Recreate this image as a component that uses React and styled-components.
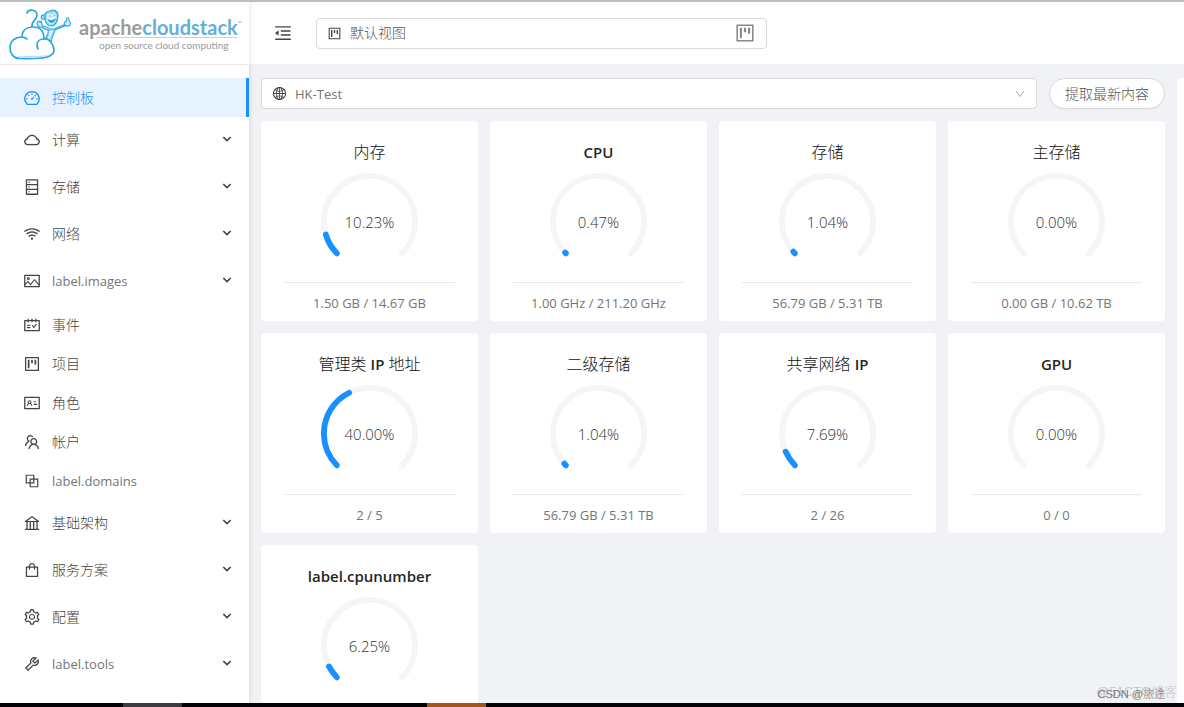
import React from "react";
import styled, { createGlobalStyle, css } from "styled-components";
import {
  AiOutlineBank,
  AiOutlineBlock,
  AiOutlineCloud,
  AiOutlineDashboard,
  AiOutlineDatabase,
  AiOutlineDown,
  AiOutlineGlobal,
  AiOutlineIdcard,
  AiOutlineMenuFold,
  AiOutlinePicture,
  AiOutlineProject,
  AiOutlineSchedule,
  AiOutlineSetting,
  AiOutlineShopping,
  AiOutlineTeam,
  AiOutlineTool,
  AiOutlineWifi,
} from "react-icons/ai";

const GlobalStyle = createGlobalStyle`
  *, *::before, *::after {
    box-sizing: border-box;
  }

  body {
    margin: 0;
    color: #555;
    background: #f0f2f5;
    font-family: "Open Sans", "Noto Sans CJK SC", sans-serif;
    font-size: 14px;
    font-weight: 300;
    line-height: 22px;
  }

  button, select {
    font: inherit;
    color: inherit;
  }
`;

const latinText = css`
  color: #757575;
  font-size: 13px;
  font-weight: 400;
`;

const Page = styled.div`
  display: flex;
  flex-direction: column;
  height: 100vh;
  border-top: 2px solid #bdbdbd;
`;

const Layout = styled.div`
  display: flex;
  flex: 1;
  min-height: 0;
  overflow: hidden;
`;

const Sidebar = styled.aside`
  z-index: 1;
  flex: none;
  width: 249px;
  background: #fff;
  box-shadow: 1px 0 4px rgba(0, 21, 41, 0.1);
`;

const LogoLink = styled.a`
  display: flex;
  align-items: center;
  gap: 7px;
  height: 63px;
  padding-left: 8px;
  border-bottom: 1px solid #e8e8e8;
  text-decoration: none;

  svg {
    flex: none;
  }
`;

const Wordmark = styled.span`
  display: flex;
  flex-direction: column;
  align-items: flex-end;
  padding-top: 2px;
  color: #9a9a9a;
  font-family: Lato, sans-serif;
`;

const WordmarkName = styled.span`
  font-size: 20px;
  font-weight: 700;
  line-height: 20px;
  white-space: nowrap;

  b {
    color: #63aedb;
    font-weight: 700;
  }

  sup {
    font-size: 5px;
    line-height: 0;
    vertical-align: 10px;
  }
`;

const WordmarkTagline = styled.span`
  margin-right: 5px;
  padding: 0 8px 0 2px;
  border-top: 1px solid #d0d0d0;
  font-size: 10px;
  font-weight: 400;
  line-height: 14px;
  white-space: nowrap;
`;

const Menu = styled.ul`
  margin: 13px 0 0;
  padding: 0;
  list-style: none;
`;

const MenuRow = styled.li`
  padding: ${({ $group }) => ($group ? "3px 0 5px" : "0")};
`;

const MenuLink = styled.a`
  display: flex;
  align-items: center;
  gap: 11px;
  height: 39px;
  padding: 0 17px 0 23px;
  color: #444;
  text-decoration: none;

  > svg:first-child {
    flex: none;
    font-size: 18px;
  }

  ${({ $active }) =>
    $active &&
    css`
      color: #1890ff;
      background: #e6f3ff;
      border-right: 3px solid #1890ff;
    `}
`;

const MenuText = styled.span`
  flex: 1;
  ${({ $latin }) => $latin && latinText}
`;

const Main = styled.main`
  display: flex;
  flex: 1;
  flex-direction: column;
  min-width: 0;
`;

const Header = styled.header`
  display: flex;
  flex: none;
  align-items: center;
  gap: 23px;
  height: 62px;
  padding: 0 24px;
  background: #fff;
  box-shadow: 0 1px 3px rgba(0, 21, 41, 0.12);
`;

const IconButton = styled.button`
  display: flex;
  padding: 0;
  border: 0;
  background: none;
  color: #444;
  font-size: 20px;
  cursor: pointer;
`;

const Field = styled.label`
  display: flex;
  flex: 1;
  align-items: center;
  gap: 8px;
  height: 31px;
  max-width: ${({ $maxWidth }) => $maxWidth || "none"};
  padding: 0 10px;
  border: 1px solid #d9d9d9;
  border-radius: 4px;
  background: #fff;

  svg {
    flex: none;
  }
`;

const FieldSelect = styled.select`
  flex: 1;
  min-width: 0;
  padding: 0;
  border: 0;
  outline: 0;
  appearance: none;
  background: none;
  ${({ $latin }) => $latin && latinText}
`;

const Content = styled.div`
  display: flex;
  flex: 1;
  gap: 12px;
  min-height: 0;
  padding: 14px 0 0 12px;
  background: #f0f2f5;
`;

const Dashboard = styled.section`
  display: flex;
  flex: 1;
  flex-direction: column;
  gap: 12px;
  min-width: 0;
`;

const Toolbar = styled.div`
  display: flex;
  gap: 12px;
`;

const FetchButton = styled.button`
  height: 31px;
  padding: 0 15px;
  border: 1px solid #d9d9d9;
  border-radius: 16px;
  background: #fff;
  box-shadow: 0 2px 0 rgba(0, 0, 0, 0.02);
  cursor: pointer;
`;

const CardGrid = styled.div`
  display: grid;
  grid-template-columns: repeat(4, 1fr);
  gap: 12px;
`;

const Card = styled.article`
  display: flex;
  flex-direction: column;
  align-items: center;
  height: 200px;
  padding: 19px 23px 0;
  border-radius: 4px;
  background: #fff;
`;

const CardTitle = styled.h2`
  margin: 0 0 9px;
  color: #111;
  font-size: 16px;
  font-weight: 300;
  line-height: 24px;
`;

const Latin = styled.span`
  color: #262626;
  font-size: 15px;
  font-weight: 600;
`;

const Gauge = styled.div`
  display: grid;
  place-items: center;

  > * {
    grid-area: 1 / 1;
  }
`;

const GaugeValue = styled.span`
  color: #333;
  font-size: 15px;
`;

const CardFooter = styled.p`
  align-self: stretch;
  margin: 12px 0 0;
  padding-top: 9px;
  border-top: 1px solid #e8e8e8;
  text-align: center;
  ${latinText}
`;

const EventsPanel = styled.aside`
  flex: none;
  width: 7px;
  border-radius: 4px 0 0 0;
  background: #fff;
`;

const Taskbar = styled.div`
  display: flex;
  flex: none;
  height: 4px;
  background: #050508;
`;

const TaskbarItem = styled.span`
  width: 59px;
  margin-left: ${({ $gap }) => $gap};
  background: ${({ $color }) => $color};
`;

const Watermark = styled.span`
  position: absolute;
  right: ${({ $right }) => $right};
  bottom: ${({ $bottom }) => $bottom};
  color: ${({ $color }) => $color};
  font-family: "Liberation Sans", "Noto Sans CJK SC", sans-serif;
  font-size: ${({ $size }) => $size};
  line-height: 16px;
`;

const CloudMonkey = () => (
  <svg width="64" height="54" viewBox="0 0 64 54" fill="none" stroke="#2aa7dc" strokeWidth="1.7" strokeLinecap="round" strokeLinejoin="round" aria-hidden="true">
    <path d="M19 7c1-4 10-4 10 2 0 6-6 5-5 12" />
    <path d="M40 23c1 5-1 8-4 11l7 4c0-6 3-9 4-14l10-4-.5-1.500L46 23z" fill="#9fd8f2" strokeWidth="1.1" />
    <path d="M41 25c1 4-1 7-3 10l3 1c0-5 3-7 4-12z" fill="#e4f5fc" stroke="none" />
    <path d="M42 24c-4 0-6-1-8-3-3 1-5-1-5-4l1-2 2 1 1-1 1 3 1 2 6 2" fill="#c4e6f6" strokeWidth="1.1" />
    <circle cx="35.500" cy="11" r="2.300" fill="#9fd8f2" strokeWidth="1.100" />
    <path d="M37 12c-1-4 1-7 5-7 4-2 8 0 8 5s-3 10-7 10-6-4-6-8z" fill="#9fd8f2" strokeWidth="1.2" />
    <path d="M39 10c1-3 3-3 5-1 1-2 4-2 4 0 1 4-1 9-5 9-3-1-5-4-4-8z" fill="#e4f5fc" stroke="none" />
    <path d="M39.500 13c3 2 6 1 8.500-1-1 6-7 7-8.500 1z" fill="#2aa7dc" stroke="none" />
    <path d="M41 10.500l1-1 1 1M45.500 10l1-1 1 1" strokeWidth=".8" />
    <path d="M58 20c-3-2-2-5 0-4l1-4c2-1 2 1 2 3 2 1 2 4 0 5-1 0-2 0-3-.5z" fill="#d9f0fa" strokeWidth="1.100" />
    <path d="M12 52.500C5 52.500 2 47 2 42c0-7 5-11 12-11 0-7 5-10 11-10 7 0 11 4 11 12 4-1 7 2 9 7 2 5 1 9-6 11-7 2-17 1.500-27 1.500z" fill="#fff" />
    <path d="M3.500 44c2 6 8 7 14 6 8-1 16 1 24-2-4 4-10 3-15 3-8 0-19 3-23-7z" fill="#b8e1f4" stroke="none" />
    <path d="M14 31c3 0 4 1 5 2M36 33c-5 0-7 3-7 6 0 2 1 3 1 4" />
  </svg>
);

const Chevron = () => (
  <svg width="10" height="14" viewBox="0 0 10 14" fill="none" stroke="#444" strokeWidth="1.7" aria-hidden="true">
    <path d="M1.300 4 5 7.500 8.700 4" />
  </svg>
);

// Arc length of the ring in viewBox units, 75 of which stay open at the bottom
const RING_LENGTH = 2 * Math.PI * 47;
const RING_GAP = 75;
const RING_PATH = "M50 50m0 47a47 47 0 1 1 0-94a47 47 0 1 1 0 94";

const GaugeRing = ({ percent }) => {
  const full = RING_LENGTH - RING_GAP;
  return (
    <svg width="97" height="97" viewBox="0 0 100 100" fill="none" strokeWidth="6" strokeLinecap="round" aria-hidden="true">
      <path d={RING_PATH} stroke="#f5f5f5" strokeDasharray={`${full} ${RING_LENGTH}`} strokeDashoffset={-RING_GAP / 2} />
      {percent > 0 && (
        <path
          d={RING_PATH}
          stroke="#1890ff"
          strokeDasharray={`${(full * percent) / 100} ${RING_LENGTH}`}
          strokeDashoffset={-RING_GAP / 2}
        />
      )}
    </svg>
  );
};

const menuItems = [
  { text: "控制板", icon: AiOutlineDashboard, active: true },
  { text: "计算", icon: AiOutlineCloud, group: true },
  { text: "存储", icon: AiOutlineDatabase, group: true },
  { text: "网络", icon: AiOutlineWifi, group: true },
  { text: "label.images", icon: AiOutlinePicture, group: true, latin: true },
  { text: "事件", icon: AiOutlineSchedule },
  { text: "项目", icon: AiOutlineProject },
  { text: "角色", icon: AiOutlineIdcard },
  { text: "帐户", icon: AiOutlineTeam },
  { text: "label.domains", icon: AiOutlineBlock, latin: true },
  { text: "基础架构", icon: AiOutlineBank, group: true },
  { text: "服务方案", icon: AiOutlineShopping, group: true },
  { text: "配置", icon: AiOutlineSetting, group: true },
  { text: "label.tools", icon: AiOutlineTool, group: true, latin: true },
];

const cards = [
  { id: "memory", title: "内存", percent: 10.23, usage: "1.50 GB / 14.67 GB" },
  { id: "cpu", title: <Latin>CPU</Latin>, percent: 0.47, usage: "1.00 GHz / 211.20 GHz" },
  { id: "storage", title: "存储", percent: 1.04, usage: "56.79 GB / 5.31 TB" },
  { id: "primary", title: "主存储", percent: 0, usage: "0.00 GB / 10.62 TB" },
  { id: "management-ip", title: <>管理类 <Latin>IP</Latin> 地址</>, percent: 40, usage: "2 / 5" },
  { id: "secondary", title: "二级存储", percent: 1.04, usage: "56.79 GB / 5.31 TB" },
  { id: "shared-ip", title: <>共享网络 <Latin>IP</Latin></>, percent: 7.69, usage: "2 / 26" },
  { id: "gpu", title: <Latin>GPU</Latin>, percent: 0, usage: "0 / 0" },
  { id: "cpunumber", title: <Latin>label.cpunumber</Latin>, percent: 6.25, usage: "" },
];

const App = () => {
  return (
    <Page>
      <GlobalStyle />
      <Layout>
        <Sidebar>
          <LogoLink href="#">
            <CloudMonkey />
            <Wordmark>
              <WordmarkName>
                apache<b>cloudstack</b>
                <sup>™</sup>
              </WordmarkName>
              <WordmarkTagline>open source cloud computing</WordmarkTagline>
            </Wordmark>
          </LogoLink>
          <nav>
            <Menu>
              {menuItems.map(({ text, icon: Icon, active, group, latin }) => (
                <MenuRow key={text} $group={group}>
                  <MenuLink href="#" $active={active}>
                    <Icon />
                    <MenuText $latin={latin}>{text}</MenuText>
                    {group && <Chevron />}
                  </MenuLink>
                </MenuRow>
              ))}
            </Menu>
          </nav>
        </Sidebar>
        <Main>
          <Header>
            <IconButton type="button" aria-label="Toggle menu">
              <AiOutlineMenuFold />
            </IconButton>
            <Field $maxWidth="451px">
              <AiOutlineProject size={15} color="#444" />
              <FieldSelect aria-label="Project">
                <option>默认视图</option>
              </FieldSelect>
              <AiOutlineProject size={22} color="#888" />
            </Field>
          </Header>
          <Content>
            <Dashboard>
              <Toolbar>
                <Field>
                  <AiOutlineGlobal size={15} color="#444" />
                  <FieldSelect $latin aria-label="Zone">
                    <option>HK-Test</option>
                  </FieldSelect>
                  <AiOutlineDown size={12} color="#b0b0b0" />
                </Field>
                <FetchButton type="button">提取最新内容</FetchButton>
              </Toolbar>
              <CardGrid>
                {cards.map(({ id, title, percent, usage }) => (
                  <Card key={id}>
                    <CardTitle>{title}</CardTitle>
                    <Gauge>
                      <GaugeRing percent={percent} />
                      <GaugeValue>{percent.toFixed(2)}%</GaugeValue>
                    </Gauge>
                    <CardFooter>{usage}</CardFooter>
                  </Card>
                ))}
              </CardGrid>
            </Dashboard>
            <EventsPanel />
          </Content>
        </Main>
      </Layout>
      <Taskbar>
        <TaskbarItem $gap="123px" $color="#3c3c40" />
        <TaskbarItem $gap="245px" $color="#a3561c" />
      </Taskbar>
      <Watermark $right="7px" $bottom="7px" $size="13px" $color="#c8c8ca">
        @51CTO博客
      </Watermark>
      <Watermark $right="19px" $bottom="5px" $size="11px" $color="#77777a">
        CSDN @旅途
      </Watermark>
    </Page>
  );
};

export default App;
